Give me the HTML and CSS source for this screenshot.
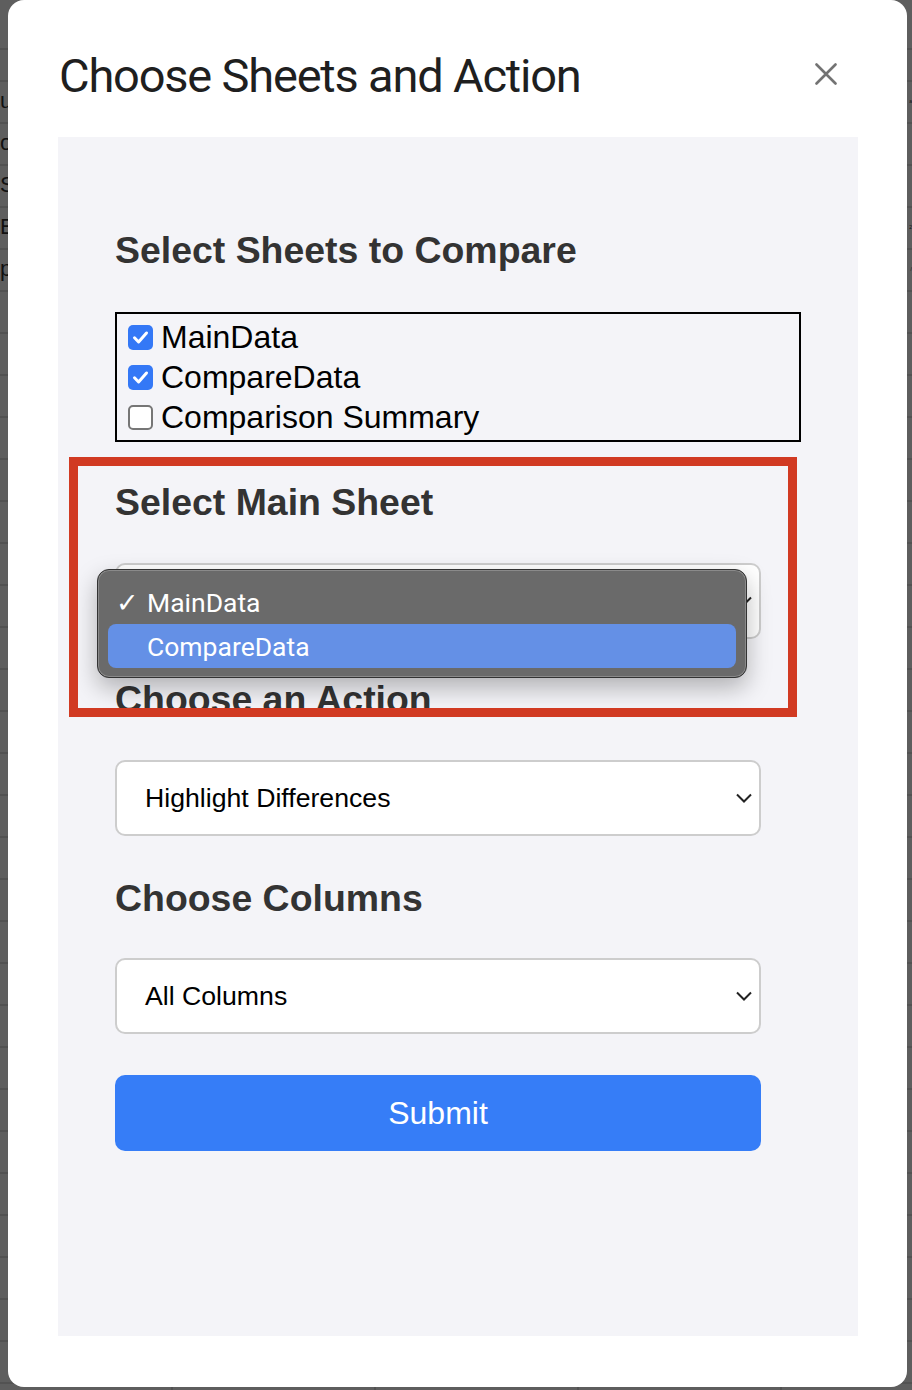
FILE: index.html
```html
<!DOCTYPE html>
<html lang="en">
<head>
<meta charset="utf-8">
<title>Choose Sheets and Action</title>
<link rel="stylesheet" href="styles.css">
</head>
<body>
<div class="sheet">
  <div class="sheet-top"></div>
  <div class="sheet-gap"></div>
  <div class="sheet-body">
    <div class="sheet-row"><span class="frag-l">u</span><span class="frag-r">a</span></div>
    <div class="sheet-row"><span class="frag-l">o</span><span class="frag-r"></span></div>
    <div class="sheet-row"><span class="frag-l">S</span><span class="frag-r"></span></div>
    <div class="sheet-row"><span class="frag-l">E</span><span class="frag-r">2</span></div>
    <div class="sheet-row"><span class="frag-l">p</span><span class="frag-r">/</span></div>
  </div>
</div>

<div class="modal">
  <header class="modal-head">
    <h2 class="title">Choose Sheets and Action</h2>
    <button class="close" aria-label="Close">
      <svg width="22" height="22" viewBox="0 0 22 22"><path d="M1.5 1.5 L20.5 20.5 M20.5 1.5 L1.5 20.5" stroke="#737373" stroke-width="2.6" fill="none" stroke-linecap="round"/></svg>
    </button>
  </header>

  <div class="panel">
    <h3 class="heading heading-first">Select Sheets to Compare</h3>
    <div class="sheet-list">
      <label class="check-row"><span class="box box-on"><svg width="25" height="25" viewBox="0 0 25 25"><path d="M6.5 12.8 L10.6 17 L18.5 8" stroke="#fff" stroke-width="3" fill="none" stroke-linecap="round" stroke-linejoin="round"/></svg></span>MainData</label>
      <label class="check-row"><span class="box box-on"><svg width="25" height="25" viewBox="0 0 25 25"><path d="M6.5 12.8 L10.6 17 L18.5 8" stroke="#fff" stroke-width="3" fill="none" stroke-linecap="round" stroke-linejoin="round"/></svg></span>CompareData</label>
      <label class="check-row"><span class="box box-off"></span>Comparison Summary</label>
    </div>

    <h3 class="heading">Select Main Sheet</h3>
    <div class="select">
      <span>MainData</span>
      <svg class="chev" width="16" height="10" viewBox="0 0 16 10"><polyline points="1,1.5 8,8.5 15,1.5" stroke="#222" stroke-width="2" fill="none"/></svg>
    </div>

    <h3 class="heading">Choose an Action</h3>
    <div class="select">
      <span>Highlight Differences</span>
      <svg class="chev" width="16" height="10" viewBox="0 0 16 10"><polyline points="1,1.5 8,8.5 15,1.5" stroke="#222" stroke-width="2" fill="none"/></svg>
    </div>

    <h3 class="heading heading-cols">Choose Columns</h3>
    <div class="select">
      <span>All Columns</span>
      <svg class="chev" width="16" height="10" viewBox="0 0 16 10"><polyline points="1,1.5 8,8.5 15,1.5" stroke="#222" stroke-width="2" fill="none"/></svg>
    </div>

    <button class="submit">Submit</button>

    <div class="popup">
      <div class="opt"><span class="tick">✓</span>MainData</div>
      <div class="opt opt-active">CompareData</div>
    </div>

    <div class="annot"></div>
  </div>
</div>
</body>
</html>
```

FILE: styles.css
```css
html, body {
  margin: 0;
  padding: 0;
}

body {
  width: 912px;
  height: 1390px;
  overflow: hidden;
  background-color: #5e5e5e;
  background-image: repeating-linear-gradient(to right, transparent 0 201px, #525252 201px 203px);
  background-position: -30px 0;
  position: relative;
  font-family: "Liberation Sans", Arial, sans-serif;
}

/* spreadsheet behind the dialog */
.sheet {
  display: flex;
  flex-direction: column;
}

.sheet-top {
  height: 48px;
  border-bottom: 2px solid #525252;
}

.sheet-gap {
  height: 30px;
}

.sheet-body {
  height: 1310px;
  background-image: repeating-linear-gradient(to bottom, #525252 0 2px, transparent 2px 42px);
}

.sheet-row {
  height: 42px;
  display: flex;
  justify-content: space-between;
  align-items: center;
  font-size: 22px;
  line-height: 26px;
  color: #111;
}

.frag-l {
  padding-left: 0;
}

.frag-r {
  padding-right: 0;
  font-size: 5px;
}

/* dialog */
.modal {
  position: absolute;
  left: 8px;
  top: 0;
  width: 899px;
  height: 1387px;
  box-sizing: border-box;
  background: #fff;
  border-radius: 16px;
  padding: 0 49px 0 50px;
}

.modal-head {
  height: 137px;
  box-sizing: border-box;
  padding: 50px 21px 0 1px;
  display: flex;
  justify-content: space-between;
  align-items: flex-start;
}

.title {
  margin: 0;
  font-family: Roboto, "Noto Sans", sans-serif;
  font-weight: 400;
  font-size: 47px;
  letter-spacing: -1.2px;
  line-height: 52px;
  color: #1f1f1f;
}

.close {
  margin-top: 13px;
  width: 22px;
  height: 22px;
  padding: 0;
  border: 0;
  background: transparent;
  display: block;
}

.close svg {
  display: block;
}

.panel {
  position: relative;
  height: 1199px;
  box-sizing: border-box;
  background: #f4f4f8;
  padding: 88px 0 0 57px;
}

.heading {
  margin: 36px 0 39px;
  padding-top: 3px;
  font-size: 37.44px;
  line-height: 43px;
  font-weight: 700;
  color: #333;
}

.heading-first {
  margin-top: 0;
  padding-top: 4px;
  margin-bottom: 40px;
}

.heading-cols {
  margin-top: 36px;
  padding-top: 5px;
  margin-bottom: 38px;
}

.sheet-list {
  width: 686px;
  box-sizing: border-box;
  border: 2px solid #000;
  padding: 3px 0 3px 11px;
}

.check-row {
  height: 40px;
  display: flex;
  align-items: center;
  gap: 8px;
  font-size: 32px;
  color: #000;
}

.box {
  width: 25px;
  height: 25px;
  box-sizing: border-box;
  border-radius: 5px;
  flex-shrink: 0;
}

.box svg {
  display: block;
}

.box-on {
  background: #3478f6;
}

.box-off {
  background: #fff;
  border: 2px solid #767676;
}

.select {
  width: 646px;
  height: 76px;
  box-sizing: border-box;
  border: 2px solid #cdcdcd;
  border-radius: 10px;
  background: #fff;
  padding: 0 7px 0 28px;
  display: flex;
  align-items: center;
  justify-content: space-between;
  font-size: 26.67px;
  color: #000;
}

.chev {
  display: block;
}

.submit {
  margin-top: 41px;
  width: 646px;
  height: 76px;
  border: 0;
  border-radius: 10px;
  background: #367df7;
  color: #fff;
  font-family: "Liberation Sans", Arial, sans-serif;
  font-size: 32px;
  display: block;
}

/* open native menu */
.popup {
  position: absolute;
  left: 39px;
  top: 432px;
  width: 650px;
  height: 109px;
  box-sizing: border-box;
  background: #6a6a6a;
  border: 1px solid #333;
  box-shadow: inset 0 0 0 1px #8a8a8a, 0 10px 24px rgba(0, 0, 0, 0.28);
  border-radius: 12px;
  padding: 10px 10px 0;
  font-family: Roboto, "Noto Sans", sans-serif;
  font-size: 26.5px;
  color: #fff;
}

.opt {
  position: relative;
  height: 44px;
  display: flex;
  align-items: center;
  padding-left: 39px;
  border-radius: 8px;
}

.opt-active {
  background: #6490e6;
}

.tick {
  position: absolute;
  left: 8px;
  top: 0;
  bottom: 0;
  display: flex;
  align-items: center;
  font-family: "DejaVu Sans", sans-serif;
  font-size: 27px;
  font-weight: 700;
}

/* red highlight annotation */
.annot {
  position: absolute;
  left: 11px;
  top: 320px;
  width: 728px;
  height: 260px;
  box-sizing: border-box;
  border: 9px solid #d13a22;
}
```
